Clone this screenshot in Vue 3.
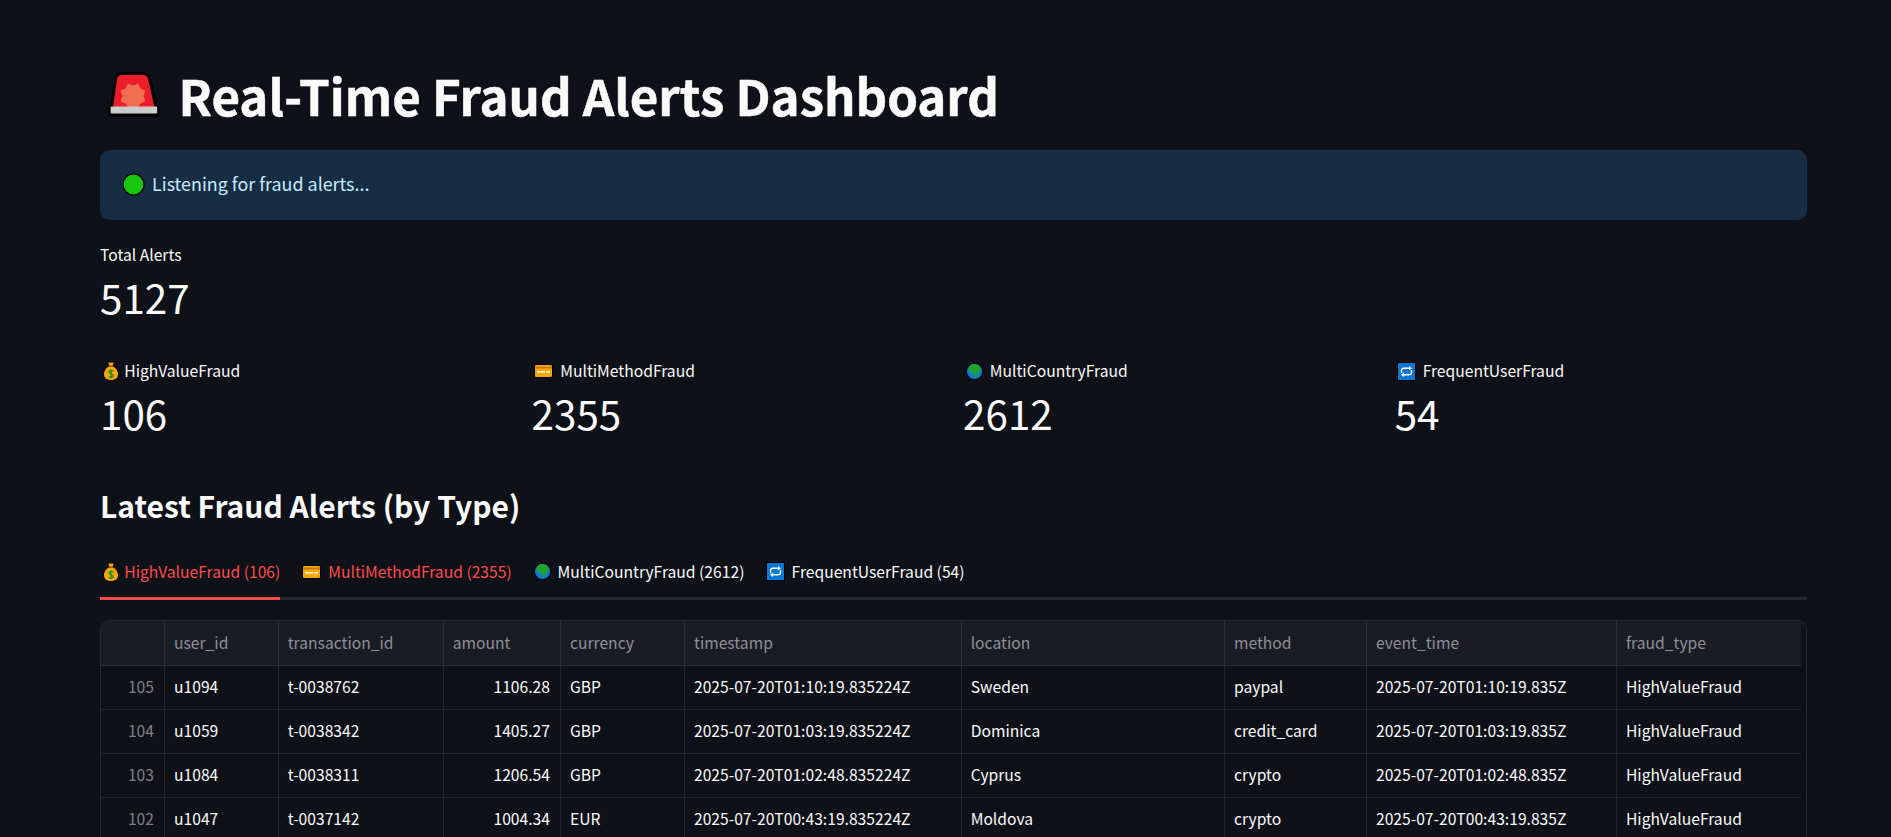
<script setup>
import { h } from 'vue'

const svg = (w, ht, vb, kids) =>
  h('svg', { width: w, height: ht, viewBox: vb, class: 'emoji', xmlns: 'http://www.w3.org/2000/svg' }, kids)
const p = (d, a = {}) => h('path', { d, ...a })

const icons = {
  bag: () => h('span', { class: 'slot bag' }, svg(16, 20, '0 0 16 20', [
    p('M4.5 1 L11.5 1 L10 5 C14 7 15.5 10.5 15.5 13 C15.5 17 12.5 19.5 8 19.5 C3.5 19.5 .5 17 .5 13 C.5 10.5 2 7 6 5 Z', { fill: '#f7a80f', stroke: '#000', 'stroke-width': 1 }),
    p('M5.5 5.2 H10.5', { stroke: '#7a4a00', 'stroke-width': 1.2 }),
    p('M10.2 10.2 C9.5 9.2 6 9 6 11 C6 13 10.3 12.6 10.3 14.7 C10.3 16.6 6.6 16.5 5.8 15.3 M8 8.3 V17.2', { fill: 'none', stroke: '#1c8a18', 'stroke-width': 1.3 }),
  ])),
  card: () => h('span', { class: 'slot card' }, svg(19, 14, '0 0 19 14', [
    h('rect', { x: .5, y: .5, width: 18, height: 13, rx: 1.5, fill: '#fca60f', stroke: '#000', 'stroke-width': 1 }),
    h('rect', { x: 1, y: 2.5, width: 17, height: 2, fill: '#c77a00' }),
    h('rect', { x: 3, y: 7, width: 8, height: 1.6, fill: '#fff3cf' }),
    h('rect', { x: 12, y: 7, width: 4, height: 1.6, fill: '#fff3cf' }),
  ])),
  globe: () => h('span', { class: 'slot globe' }, svg(17, 17, '0 0 17 17', [
    h('circle', { cx: 8.5, cy: 8.5, r: 8, fill: '#0f7dd4', stroke: '#000', 'stroke-width': 1 }),
    p('M5 1.6 C7 .9 11 1 13 2.5 L15.5 7 L12.5 9 L11 13.5 L9 14.5 L8 10.5 L4.5 9.5 L2.5 7 C2.7 4.5 3.5 2.6 5 1.6 Z', { fill: '#1fa32b' }),
  ])),
  repeat: () => h('span', { class: 'slot repeat' }, svg(19, 19, '0 0 19 19', [
    h('rect', { x: .5, y: .5, width: 18, height: 18, fill: '#0a78d2', stroke: '#000', 'stroke-width': 1 }),
    p('M4.5 11 V8.5 C4.5 7 5.5 6.3 7 6.3 H13', { fill: 'none', stroke: '#fff', 'stroke-width': 1.4 }),
    p('M14.5 8 V10.5 C14.5 12 13.5 12.7 12 12.7 H6', { fill: 'none', stroke: '#fff', 'stroke-width': 1.4 }),
    p('M12 4 L15 6.3 L12 8.6 Z M7 10.4 L4 12.7 L7 15 Z', { fill: '#fff' }),
  ])),
}
const EmojiIcon = (props) => icons[props.name]()
EmojiIcon.props = ['name']

const metrics = [
  { icon: 'bag', label: 'HighValueFraud', value: 106 },
  { icon: 'card', label: 'MultiMethodFraud', value: 2355 },
  { icon: 'globe', label: 'MultiCountryFraud', value: 2612 },
  { icon: 'repeat', label: 'FrequentUserFraud', value: 54 },
]

const columns = ['user_id', 'transaction_id', 'amount', 'currency', 'timestamp', 'location', 'method', 'event_time', 'fraud_type']
const rows = [
  ['105', 'u1094', 't-0038762', '1106.28', 'GBP', '2025-07-20T01:10:19.835224Z', 'Sweden', 'paypal', '2025-07-20T01:10:19.835Z', 'HighValueFraud'],
  ['104', 'u1059', 't-0038342', '1405.27', 'GBP', '2025-07-20T01:03:19.835224Z', 'Dominica', 'credit_card', '2025-07-20T01:03:19.835Z', 'HighValueFraud'],
  ['103', 'u1084', 't-0038311', '1206.54', 'GBP', '2025-07-20T01:02:48.835224Z', 'Cyprus', 'crypto', '2025-07-20T01:02:48.835Z', 'HighValueFraud'],
  ['102', 'u1047', 't-0037142', '1004.34', 'EUR', '2025-07-20T00:43:19.835224Z', 'Moldova', 'crypto', '2025-07-20T00:43:19.835Z', 'HighValueFraud'],
]
</script>

<template>
  <div class="page">
    <h1 class="title">
      <svg class="siren" width="54" height="46" viewBox="0 0 54 46" xmlns="http://www.w3.org/2000/svg">
        <path d="M15 3 H36 C39 3 40.5 4.5 41 7 L47.5 35 H6 L10 7 C10.5 4.5 12 3 15 3 Z" fill="#000" stroke="#000" stroke-width="6" stroke-linejoin="round" />
        <rect x="1" y="33" width="52" height="12" rx="4" fill="#000" />
        <path d="M15 3 H36 C39 3 40.5 4.5 41 7 L47.5 35 H6 L10 7 C10.5 4.5 12 3 15 3 Z" fill="#ec1c2a" />
        <path d="M20.8 11.5 L26 13.5 L31.2 11.5 L33.4 16.6 L38.5 18.8 L36.5 24 L38.5 29.2 L33.4 31.4 L31 35 H21 L18.6 31.4 L13.5 29.2 L15.5 24 L13.5 18.8 L18.6 16.6 Z" fill="#f26e50" />
        <rect x="3.6" y="34.6" width="46.6" height="7" rx="1" fill="#cbcbcb" />
      </svg>
      <span class="title-text">Real-Time Fraud Alerts Dashboard</span>
    </h1>

    <div class="alert">
      <svg class="dot" width="23" height="23" viewBox="0 0 23 23" xmlns="http://www.w3.org/2000/svg">
        <circle cx="11.5" cy="11.5" r="10.5" fill="#16c60c" stroke="#000" stroke-width="1.2" />
      </svg>
      <span class="alert-text">Listening for fraud alerts...</span>
    </div>

    <div class="metric total">
      <div class="metric-label">Total Alerts</div>
      <div class="metric-value">5127</div>
    </div>

    <div class="metric-grid">
      <div v-for="m in metrics" :key="m.label" class="metric">
        <div class="metric-label">
          <EmojiIcon :name="m.icon" />{{ m.label }}
        </div>
        <div class="metric-value">{{ m.value }}</div>
      </div>
    </div>

    <h2 class="heading">Latest Fraud Alerts (by Type)</h2>

    <div class="tabs">
      <div v-for="(m, i) in metrics" :key="m.label" class="tab" :class="{ active: i === 0, hot: i < 2 }">
        <EmojiIcon :name="m.icon" />{{ m.label }} ({{ m.value }})
      </div>
    </div>

    <div class="table">
      <div class="tr head">
        <div class="td idx"></div>
        <div v-for="c in columns" :key="c" class="td">{{ c }}</div>
      </div>
      <div v-for="r in rows" :key="r[0]" class="tr">
        <div class="td idx">{{ r[0] }}</div>
        <div v-for="(v, i) in r.slice(1)" :key="i" class="td" :class="{ num: i === 2 }">{{ v }}</div>
      </div>
    </div>
  </div>
</template>

<style>
html, body { margin: 0; background: #0e1117; overflow: hidden; }
</style>

<style scoped>
.page {
  box-sizing: border-box;
  height: 837px;
  overflow: hidden;
  padding: 65px 84px 0 100px;
  background: #0e1117;
  color: #fafafa;
  font-family: "Noto Sans CJK SC", "Noto Sans", sans-serif;
}
.title {
  display: flex;
  align-items: center;
  gap: 17.5px;
  height: 60px;
  margin: 0 0 25px;
  padding-left: 7px;
  font-size: 49.2px;
  font-weight: 700;
  line-height: 60px;
  letter-spacing: 0;
}
.title-text { -webkit-text-stroke: 0.5px #fafafa; }
.alert {
  display: flex;
  align-items: center;
  gap: 7px;
  box-sizing: border-box;
  height: 70px;
  padding: 0 22px;
  border-radius: 9.6px;
  background: #172d43;
  color: #c7ebff;
  font-size: 17.9px;
}
.dot { margin-bottom: 2px; }
.alert-text { margin-bottom: 5px; }
.metric-label {
  display: flex;
  align-items: center;
  height: 24px;
  font-size: 15.66px;
  line-height: 24px;
}
.metric-value {
  height: 54px;
  margin-top: 3px;
  font-size: 40.4px;
  line-height: 54px;
}
.total { margin-top: 23px; }
.metric-grid {
  display: grid;
  grid-template-columns: repeat(4, 1fr);
  gap: 19.2px;
  margin-top: 35px;
}
.heading {
  height: 48px;
  margin: 41px 0 0;
  font-size: 30px;
  font-weight: 600;
  line-height: 48px;
}
.tabs {
  display: flex;
  gap: 19.2px;
  height: 57.5px;
  margin-top: 13.5px;
  box-sizing: border-box;
  border-bottom: 3px solid #262730;
}
.tab {
  display: flex;
  align-items: center;
  box-sizing: border-box;
  height: 57.5px;
  padding-top: 3.5px;
  border-bottom: 3px solid transparent;
  font-size: 15.66px;
  color: #fafafa;
  white-space: nowrap;
}
.tab.hot { color: #ff4b4b; }
.tab.active { border-bottom-color: #ff4b4b; }
.slot { display: inline-flex; align-items: center; flex: none; }
.bag { width: 24.3px; padding-left: 2.7px; box-sizing: border-box; }
.card { width: 28.7px; padding-left: 2px; box-sizing: border-box; }
.globe { width: 26.7px; padding-left: 3px; box-sizing: border-box; }
.repeat { width: 28px; padding-left: 2px; box-sizing: border-box; }
.table {
  box-sizing: border-box;
  margin-top: 20px;
  height: 260px;
  padding-right: 5px;
  border: 1px solid #262730;
  border-bottom: 0;
  border-radius: 10px 10px 0 0;
  overflow: hidden;
  font-size: 15.66px;
}
.tr {
  display: grid;
  grid-template-columns: 64px 113.7px 165px 117.3px 124px 276.7px 263.3px 142px 250px 1fr;
  height: 44px;
  border-bottom: 1px solid #23252c;
  box-sizing: border-box;
}
.tr.head {
  height: 45px;
  background: #1a1c24;
  color: #8e9097;
  border-bottom-color: #2d2f37;
}
.tr.head .td { line-height: 44px; border-right-color: #2d2f37; background: #1a1c24; }
.td {
  box-sizing: border-box;
  padding: 0 9px;
  border-right: 1px solid #23252c;
  line-height: 41px;
  white-space: nowrap;
  overflow: hidden;
  color: inherit;
}
.td:last-child { border-right: 0; }
.idx { text-align: right; color: #7d8087; padding-right: 10px; }
.num { text-align: right; padding-right: 10px; }
</style>
